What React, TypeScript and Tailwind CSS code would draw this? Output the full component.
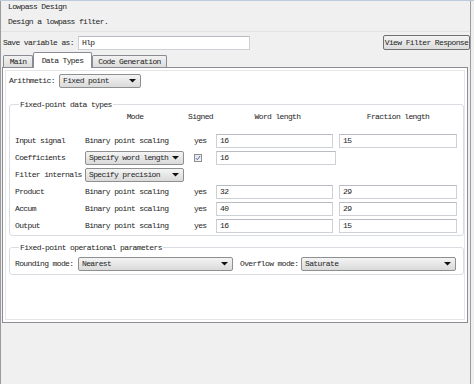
import React from 'react';

const Arrow = () => (
    <svg width="7" height="4" viewBox="0 0 7 4" className="shrink-0">
        <polygon points="0,0 7,0 3.5,3.5" fill="#111" />
    </svg>
);

const Select: React.FC<{ value: string; w: string }> = ({ value, w }) => (
    <div className={`${w} h-[14px] flex items-center justify-between pl-[3px] pr-[4px] border border-[#8e8f8f] rounded-[2px] bg-linear-to-b from-[#f4f4f4] to-[#dadada]`}>
        <span className="leading-none">{value}</span>
        <Arrow />
    </div>
);

const Field: React.FC<{ value: string; w: string }> = ({ value, w }) => (
    <div className={`${w} h-[14px] flex items-center px-[3px] border border-[#cdd0d5] border-t-[#b9bcc2] bg-white`}>
        <span className="leading-none">{value}</span>
    </div>
);

const Check = () => (
    <div className="w-[8px] h-[8px] border border-[#8f8f8f] bg-linear-to-br from-[#dfe6f0] to-[#f4f6fa] flex items-center justify-center">
        <svg width="6" height="6" viewBox="0 0 6 6">
            <path d="M1 3.2 L2.4 4.8 L5 1" stroke="#5a6ba0" strokeWidth="1" fill="none" />
        </svg>
    </div>
);

const Tab: React.FC<{ label: string; w: string; active?: boolean }> = ({ label, w, active }) =>
    active ? (
        <div className={`${w} h-[16px] mb-[-1px] relative z-10 flex items-center justify-center bg-white border border-[#898c95] border-b-0 rounded-t-[2px]`}>
            {label}
        </div>
    ) : (
        <div className={`${w} h-[12px] flex items-center justify-center border border-[#898c95] border-b-0 rounded-t-[2px] bg-linear-to-b from-[#f2f2f2] to-[#dcdcdc]`}>
            {label}
        </div>
    );

const rows = [
    { label: 'Input signal', mode: 'Binary point scaling', word: '16', frac: '15' },
    { label: 'Coefficients', select: 'Specify word length', check: true, word: '16' },
    { label: 'Filter internals', select: 'Specify precision' },
    { label: 'Product', mode: 'Binary point scaling', word: '32', frac: '29' },
    { label: 'Accum', mode: 'Binary point scaling', word: '40', frac: '29' },
    { label: 'Output', mode: 'Binary point scaling', word: '16', frac: '15' },
];

const App: React.FC = () => {
    return (
        <div className="w-[474px] h-[384px] overflow-hidden bg-[#f0f0f0] border-t border-[#bccadb] text-[8px] tracking-[-0.63px] text-[#1e1e1e] font-[family-name:'Liberation_Mono','DejaVu_Sans_Mono',monospace]">
            <div className="w-[471px] h-full border-l border-r border-[#9b9b9b] flex flex-col">
                {/* header */}
                <div className="h-[31px] pl-[7px] border-b border-[#e3e3e3] flex flex-col">
                    <div className="h-[12px] flex items-center">Lowpass Design</div>
                    <div className="h-[14px] mt-[2px] flex items-center">Design a lowpass filter.</div>
                </div>

                {/* save row */}
                <div className="mt-[3px] h-[15px] pl-[2px] flex items-center">
                    <span className="w-[75px]">Save variable as:</span>
                    <Field value="Hlp" w="w-[172px]" />
                    <div className="flex-1" />
                    <div className="w-[87px] h-[15px] flex items-center justify-center border border-[#707070] rounded-[2px] bg-linear-to-b from-[#f3f3f3] to-[#dcdcdc]">
                        View Filter Response
                    </div>
                </div>

                {/* tabs */}
                <div className="mt-[2px] pl-[2px] flex items-end">
                    <Tab label="Main" w="w-[30px]" />
                    <Tab label="Data Types" w="w-[59px]" active />
                    <Tab label="Code Generation" w="w-[75px]" />
                </div>

                {/* panel */}
                <div className="ml-[1px] w-[466px] h-[256px] border border-[#898c95] bg-white p-[2px]">
                    <div className="h-full border border-[#e6e6e6] pl-[3px] pr-[3px]">
                        <div className="mt-[3px] h-[14px] flex items-center">
                            <span className="w-[50px]">Arithmetic:</span>
                            <Select value="Fixed point" w="w-[82px]" />
                        </div>

                        <fieldset className="mt-[11px] w-[455px] border border-[#d9dde2] rounded-[3px] pl-[5px] pb-[1px]">
                            <legend className="ml-[4px] px-[1px] leading-[11px]">Fixed-point data types</legend>
                            <div className="grid grid-cols-[70px_100px_31px_123px_118px] items-center">
                                <div className="h-[14px]" />
                                <div className="h-[14px] flex items-center justify-center">Mode</div>
                                <div className="h-[14px] flex items-center justify-center">Signed</div>
                                <div className="h-[14px] flex items-center justify-center">Word length</div>
                                <div className="h-[14px] flex items-center justify-center">Fraction length</div>
                                <div className="col-span-5 h-[8px]" />
                                {rows.map((r) => (
                                    <React.Fragment key={r.label}>
                                        <div className="h-[17px] flex items-center whitespace-nowrap">{r.label}</div>
                                        <div className="h-[17px] flex items-center">
                                            {r.select ? <Select value={r.select} w="w-[99px]" /> : r.mode}
                                        </div>
                                        <div className="h-[17px] flex items-center pl-[9px]">
                                            {r.check ? <Check /> : r.mode ? 'yes' : null}
                                        </div>
                                        <div className="h-[17px] flex items-center">
                                            {r.word && <Field value={r.word} w={r.check ? 'w-[120px]' : 'w-[117px]'} />}
                                        </div>
                                        <div className="h-[17px] flex items-center">
                                            {r.frac && <Field value={r.frac} w="w-[118px]" />}
                                        </div>
                                    </React.Fragment>
                                ))}
                            </div>
                        </fieldset>

                        <fieldset className="mt-[6px] w-[455px] border border-[#d9dde2] rounded-[3px] pl-[5px] pb-[3px]">
                            <legend className="ml-[4px] px-[1px] leading-[11px]">Fixed-point operational parameters</legend>
                            <div className="mt-[4px] h-[14px] flex items-center">
                                <span className="w-[63px]">Rounding mode:</span>
                                <Select value="Nearest" w="w-[155px]" />
                                <span className="ml-[7px] w-[61px]">Overflow mode:</span>
                                <Select value="Saturate" w="w-[155px]" />
                            </div>
                        </fieldset>
                    </div>
                </div>
            </div>
        </div>
    );
};

export default App;
